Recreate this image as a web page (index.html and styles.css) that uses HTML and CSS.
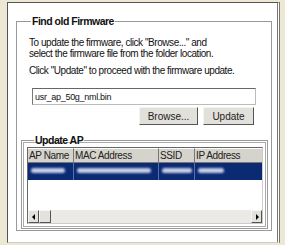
FILE: index.html
```html
<!doctype html>
<html>
<head>
<meta charset="utf-8">
<title>Update Firmware</title>
<link rel="stylesheet" href="styles.css">
</head>
<body>
<div class="panel">
    <fieldset class="box">
        <legend>Find old Firmware</legend>
        <p class="desc">To update the firmware, click "Browse..." and<br>select the firmware file from the folder location.</p>
        <p class="desc desc2">Click "Update" to proceed with the firmware update.</p>
        <input class="file" type="text" value="usr_ap_50g_nml.bin">
        <div class="buttons">
            <button class="btn browse">Browse...</button>
            <button class="btn update">Update</button>
        </div>
        <fieldset class="box inner">
            <legend>Update AP</legend>
            <div class="list">
                <div class="row head">
                    <div class="c1">AP Name</div>
                    <div class="c2">MAC Address</div>
                    <div class="c3">SSID</div>
                    <div class="c4">IP Address</div>
                </div>
                <div class="row sel">
                    <div class="c1"><span class="blur" style="width:34px"></span></div>
                    <div class="c2"><span class="blur" style="width:74px"></span></div>
                    <div class="c3"><span class="blur" style="width:30px"></span></div>
                    <div class="c4"><span class="blur" style="width:26px"></span></div>
                </div>
                <div class="empty"></div>
                <div class="hscroll">
                    <div class="arrow left"></div>
                    <div class="thumb"></div>
                    <div class="track"></div>
                    <div class="arrow right"></div>
                </div>
            </div>
        </fieldset>
    </fieldset>
</div>
</body>
</html>
```
FILE: styles.css
```css
body {
    margin: 0;
    background-color: #ede8d3;
    font-family: "Liberation Sans", Arial, sans-serif;
    font-size: 10px;
    color: #111;
}
.panel {
    margin: 2px 0 0 7px;
    width: 256px;
    height: 239px;
    padding: 0 5px 0 8px;
    background-color: #fff;
    border-left: 1px solid #555;
    border-top: 1px solid #555;
    border-right: 3px double #777;
    border-bottom: 1px solid #ccc;
    box-sizing: content-box;
}
.box {
    margin: 0;
    padding: 0 3px 0 4px;
    border: 1px solid #999;
    min-width: 0;
}
.panel > .box {
    margin-top: 12px;
    height: 216px;
    box-sizing: border-box;
}
legend {
    font-weight: bold;
    font-size: 10.5px;
    letter-spacing: -0.5px;
    color: #111;
    padding: 0 1px;
    margin-left: 10px;
}
.desc {
    margin: 10px 0 0 8px;
    line-height: 11px;
    letter-spacing: -0.45px;
}
.desc2 {
    margin-top: 6px;
}
.file {
    display: block;
    margin: 12px 0 0 11px;
    width: 224px;
    height: 17px;
    box-sizing: border-box;
    padding: 0 2px;
    border: 1px solid #bbb;
    border-top-color: #666;
    border-left-color: #777;
    font-family: "Liberation Sans", Arial, sans-serif;
    font-size: 9px;
    letter-spacing: -0.3px;
    color: #111;
    outline: none;
}
.buttons {
    display: flex;
    justify-content: flex-end;
    gap: 5px;
    margin: 2px 14px 0 0;
}
.btn {
    height: 18px;
    padding: 0;
    background-color: #e2e0db;
    border: 1px solid #f4f4f4;
    border-right-color: #555;
    border-bottom-color: #555;
    font-family: "Liberation Sans", Arial, sans-serif;
    font-size: 10px;
    color: #222;
}
.browse {
    width: 59px;
}
.update {
    width: 51px;
}
.inner {
    margin: 9px 0 0 0;
    padding: 0 4px 4px 5px;
    box-shadow: inset 0 0 0 1px #fff, inset 0 0 0 2px #aaa;
}
.inner legend {
    margin-left: 7px;
}
.list {
    margin-top: 1px;
    height: 77px;
    box-sizing: border-box;
    border: 1px solid #666;
    border-right-color: #ccc;
    border-bottom-color: #ccc;
    display: flex;
    flex-direction: column;
    overflow: hidden;
}
.row {
    display: flex;
}
.head {
    height: 15px;
    background-color: #d6d3cc;
    font-size: 10px;
    letter-spacing: -0.4px;
    line-height: 13px;
    color: #222;
}
.head > div {
    box-sizing: border-box;
    padding-left: 1px;
    border-right: 1px solid #777;
    border-bottom: 1px solid #777;
    border-top: 1px solid #fff;
    white-space: nowrap;
    overflow: hidden;
}
.c1 { width: 46px; flex: none; box-sizing: border-box; }
.c2 { width: 85px; flex: none; box-sizing: border-box; }
.c3 { width: 36px; flex: none; box-sizing: border-box; }
.c4 { flex: 1; }
.head .c4 { border-right: none; }
.sel {
    height: 17px;
    background-color: #0b2a74;
}
.sel > div {
    border-right: 1px solid #5a6fa8;
    padding: 5px 0 0 3px;
    box-sizing: border-box;
}
.sel .c4 {
    border-right: none;
}
.blur {
    display: block;
    height: 5px;
    border-radius: 3px;
    background-color: #c4cde6;
    filter: blur(1.3px);
}
.empty {
    flex: 1;
}
.hscroll {
    height: 13px;
    display: flex;
    background-color: #ebeae6;
}
.arrow, .thumb {
    width: 11px;
    flex: none;
    box-sizing: border-box;
    background-color: #e4e2dc;
    border: 1px solid #f6f6f6;
    border-right-color: #555;
    border-bottom-color: #555;
    position: relative;
}
.thumb {
    width: 12px;
}
.track {
    flex: 1;
}
.arrow::after {
    content: "";
    position: absolute;
    top: 3px;
    border-top: 3px solid transparent;
    border-bottom: 3px solid transparent;
}
.left::after {
    left: 3px;
    border-right: 3px solid #000;
}
.right::after {
    left: 4px;
    border-left: 3px solid #000;
}
```
